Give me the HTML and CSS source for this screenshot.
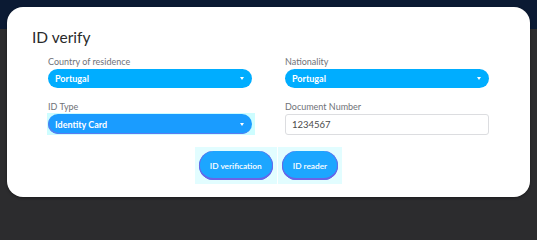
FILE: index.html
```html
<!DOCTYPE html>
<html lang="en">
<head>
<meta charset="utf-8">
<title>ID verify</title>
<link rel="stylesheet" href="styles.css">
</head>
<body>
<div class="page">
  <div class="card">
    <h1 class="title">ID verify</h1>
    <div class="form">
      <div class="field">
        <label class="label">Country of residence</label>
        <div class="select"><span>Portugal</span><span class="caret"></span></div>
      </div>
      <div class="field">
        <label class="label">Nationality</label>
        <div class="select"><span>Portugal</span><span class="caret"></span></div>
      </div>
      <div class="field">
        <label class="label">ID Type</label>
        <div class="glow">
          <div class="select select-active"><span>Identity Card</span><span class="caret"></span></div>
        </div>
      </div>
      <div class="field">
        <label class="label">Document Number</label>
        <div class="input">1234567</div>
      </div>
    </div>
    <div class="actions">
      <div class="btn-glow"><button class="btn">ID verification</button></div>
      <div class="btn-glow"><button class="btn">ID reader</button></div>
    </div>
  </div>
</div>
</body>
</html>
```

FILE: styles.css
```css
* { box-sizing: border-box; }
html {
  margin: 0;
  padding: 0;
  background: #2c2c2e;
}
body {
  margin: 0;
  padding: 0;
  width: 537px;
  height: 206px;
  overflow: hidden;
  font-family: Lato, "Open Sans", sans-serif;
  background: linear-gradient(to bottom, #0b1a33 0, #0b1a33 29px, #2c2c2e 29px, #2c2c2e 100%);
}
.page {
  padding: 7px 7px 0 7px;
}
.card {
  width: 523px;
  height: 190px;
  background: #ffffff;
  border-radius: 16px;
  padding: 20px 0 0 0;
  box-shadow: 0 1px 3px rgba(0,0,0,0.4);
}
.title {
  margin: 0 0 0 25px;
  font-size: 15.5px;
  line-height: 20px;
  font-weight: 400;
  color: #2a2a2a;
}
.form {
  margin: 9px 0 0 41px;
  display: grid;
  grid-template-columns: 204px 204px;
  column-gap: 33px;
  row-gap: 13px;
}
.field {
  display: flex;
  flex-direction: column;
}
.label {
  font-size: 9px;
  line-height: 11px;
  color: #6f7278;
  margin-bottom: 2px;
}
.select {
  height: 19px;
  border-radius: 10px;
  background: #00adff;
  color: #ffffff;
  font-size: 9px;
  font-weight: 700;
  display: flex;
  align-items: center;
  justify-content: space-between;
  padding: 0 8px 0 7px;
}
.caret {
  width: 0;
  height: 0;
  border-left: 2.5px solid transparent;
  border-right: 2.5px solid transparent;
  border-top: 3px solid #ffffff;
}
.glow {
  background: #cdfdff;
  margin: -1px -3px -1px -1px;
  padding: 1px 3px 1px 1px;
}
.select-active {
  height: 20px;
  background: #1a9cff;
  box-shadow: inset 1px -1px 0 #5b7cf0;
}
.input {
  height: 21px;
  border: 1px solid #dcdde0;
  border-radius: 3px;
  font-size: 9.5px;
  color: #4a4a4a;
  display: flex;
  align-items: center;
  padding-left: 6px;
}
.actions {
  margin-top: 12px;
  display: flex;
  justify-content: center;
  gap: 1px;
}
.btn-glow {
  background: #e2fdff;
  padding: 4px 4px;
}
.btn {
  height: 29px;
  border: none;
  border-radius: 15px;
  background: #1ca6ff;
  box-shadow: inset 0 -2px 0 #6a63e6, inset 1px 0 0 #6a6ae8, inset -1px 0 0 #6a6ae8;
  color: #ffffff;
  font-family: Lato, "Open Sans", sans-serif;
  font-size: 8.3px;
  font-weight: 600;
  padding: 0 11px;
  white-space: nowrap;
}
```
